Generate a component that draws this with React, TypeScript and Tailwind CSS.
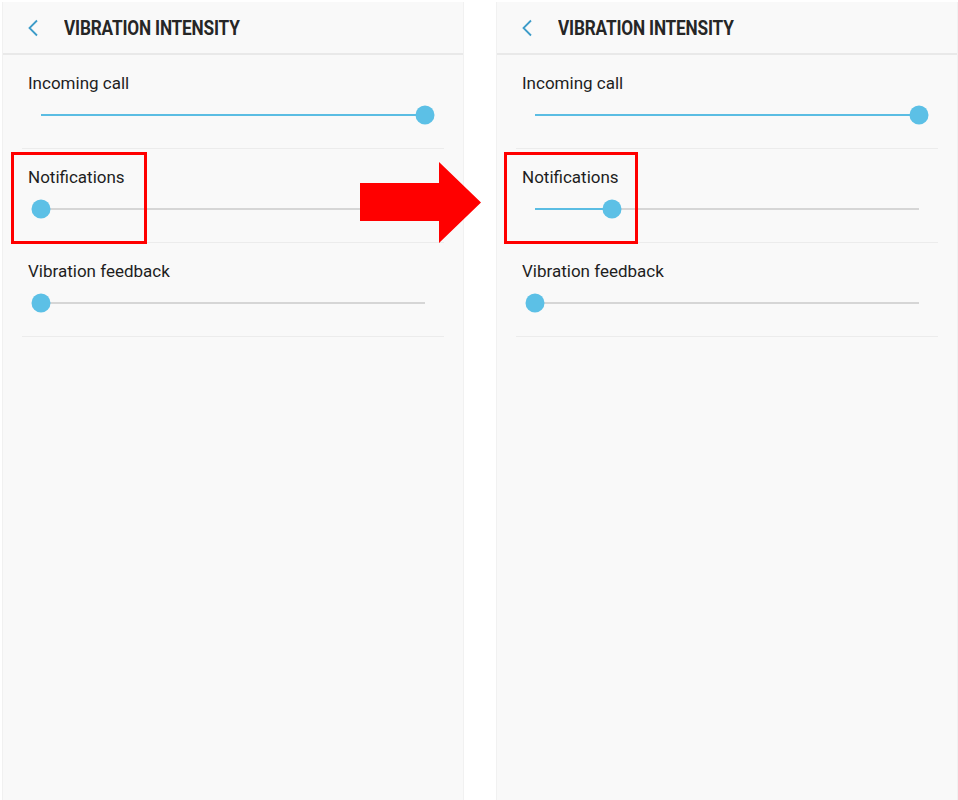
type Row = { label: string; value: number };

function Slider({ value }: { value: number }) {
  return (
    <div className="mx-[19px] h-[20px] flex items-center">
      <div className="relative w-full h-[2px] bg-[#d6d6d6]">
        <div className="absolute left-0 top-0 h-[2px] bg-[#5bbde3]" style={{ width: `${value * 100}%` }} />
        <div
          className="absolute top-1/2 w-[19px] h-[19px] -translate-x-1/2 -translate-y-1/2 rounded-full bg-[#5cc0e6]"
          style={{ left: `${value * 100}%` }}
        />
      </div>
    </div>
  );
}

function Panel({ rows }: { rows: Row[] }) {
  return (
    <div className="w-[462px] h-[798px] mt-[2px] bg-[#f9f9f9] border-x border-[#f1f1f1] flex flex-col">
      <div className="h-[53px] flex items-center border-b-2 border-[#e9e9e9] shrink-0">
        <svg width="12" height="18" viewBox="0 0 12 18" className="ml-[24px]">
          <polyline points="10,1.5 2.5,9 10,16.5" fill="none" stroke="#3d9cc9" strokeWidth="1.8" />
        </svg>
        <h1 className="ml-[25px] font-['Roboto',sans-serif] font-bold text-[20px] tracking-[-0.2px] text-[#262626] scale-x-[0.86] origin-left whitespace-nowrap">
          VIBRATION INTENSITY
        </h1>
      </div>
      {rows.map((r) => (
        <div key={r.label} className="mx-[19px] pt-[18px] pb-[23px] border-b border-[#ececec]">
          <div className="pl-[6px] h-[20px] leading-[20px] font-['Roboto',sans-serif] text-[17px] text-[#1e1e1e]">
            {r.label}
          </div>
          <div className="mt-[12px]">
            <Slider value={r.value} />
          </div>
        </div>
      ))}
    </div>
  );
}

export default function App() {
  return (
    <div className="relative w-[958px] h-[800px] bg-white flex overflow-hidden">
      <div className="ml-[2px]">
        <Panel
          rows={[
            { label: "Incoming call", value: 1 },
            { label: "Notifications", value: 0 },
            { label: "Vibration feedback", value: 0 },
          ]}
        />
      </div>
      <div className="ml-[32px]">
        <Panel
          rows={[
            { label: "Incoming call", value: 1 },
            { label: "Notifications", value: 0.2 },
            { label: "Vibration feedback", value: 0 },
          ]}
        />
      </div>

      <div className="absolute left-[11px] top-[152px] w-[136px] h-[92px] border-[3px] border-[#ff0000]" />
      <div className="absolute left-[504px] top-[152px] w-[134px] h-[92px] border-[3px] border-[#ff0000]" />
      <svg className="absolute left-[360px] top-[162px]" width="122" height="81" viewBox="0 0 122 81">
        <polygon points="0,21 79,21 79,0 121,40.5 79,81 79,59 0,59" fill="#ff0000" />
      </svg>
    </div>
  );
}
